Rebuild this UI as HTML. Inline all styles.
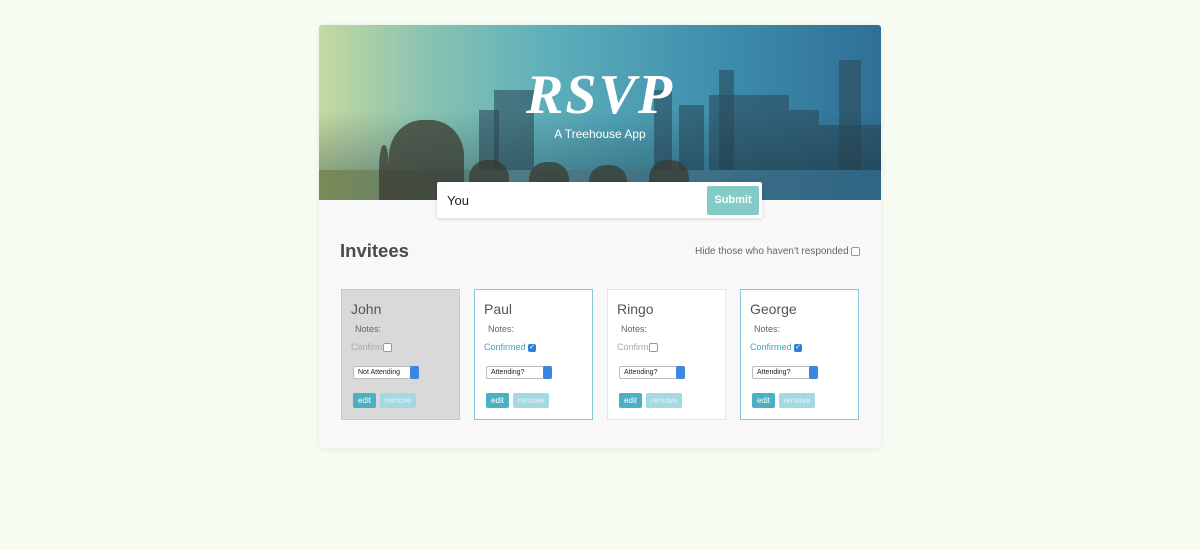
<!DOCTYPE html>
<html><head><style>
body{margin:0;background:#f6fcf2;font-family:"Liberation Sans",sans-serif;width:1200px;height:550px;position:relative;overflow:hidden}
.main{position:absolute;left:319px;top:25px;width:562px;height:423px;background:#f8f8f8;border-radius:3px;box-shadow:0 1px 6px rgba(0,0,0,.08);overflow:hidden}
.hdr{position:absolute;left:0;top:0;width:562px;height:175px;background:linear-gradient(90deg,#c5d9a0 0%,#8cc4b0 18%,#5fb0bb 40%,#3f8fae 70%,#2f6f96 100%);overflow:hidden}
.hdr .shade{position:absolute;left:0;right:0;bottom:0;height:90px;background:linear-gradient(180deg,rgba(20,40,50,0),rgba(20,40,50,.45))}
.b{position:absolute;bottom:0;background:#2c4b5a;opacity:.6}
.water{position:absolute;left:0;right:0;bottom:0;height:30px;background:linear-gradient(90deg,#7a8a55,#4d7a85 35%,#2f6585)}
.p{position:absolute;bottom:0;background:#3a3a30;opacity:.75;border-radius:45% 45% 0 0}
h1{position:absolute;left:0;width:562px;top:38px;margin:0;text-align:center;font:italic bold 56px "Liberation Serif",serif;color:#fff;letter-spacing:2px}
.sub{position:absolute;left:0;width:562px;top:102px;text-align:center;color:#fff;font-size:12px}
.inp{position:absolute;left:437px;top:182px;width:325px;height:36px;background:#fff;border-radius:2px;box-shadow:0 1px 4px rgba(0,0,0,.15)}
.inp span{position:absolute;left:10px;top:11px;font-size:13px;color:#222}
.sb{position:absolute;left:270px;top:4px;width:52px;height:29px;background:#83cbc6;color:#fff;font-size:11px;font-weight:bold;text-align:center;line-height:29px;border-radius:2px}
.title{position:absolute;left:340px;top:240px;font-size:18.5px;font-weight:bold;color:#4a4a4a}
.hide{position:absolute;left:695px;top:246px;font-size:10px;color:#666;white-space:nowrap}
.cb{display:inline-block;width:7px;height:7px;border:1px solid #999;border-radius:2px;background:#fff;vertical-align:middle}
.cbc{display:inline-block;width:8px;height:8px;border-radius:2px;background:#2f7fd6;vertical-align:middle;color:#fff;font-size:7px;line-height:8px;text-align:center}
.card{position:absolute;top:289px;width:119px;height:131px;background:#fff;border:1px solid #e6e6e6;box-sizing:border-box}
.card.r{border-color:#86c7de}
.card.n{background:#d9d9d9;border-color:#c8c8c8}
.nm{position:absolute;left:9px;top:11px;font-size:14px;color:#555}
.nt{position:absolute;left:13px;top:34px;font-size:9px;color:#666}
.cf{position:absolute;left:9px;top:52px;font-size:9px;color:#aaa}
.card.r .cf{color:#3ea3c4}
.sel{position:absolute;left:11px;top:76px;width:60px;height:11px;border:1px solid #bbb;border-radius:2px;background:#fff;font-size:7px;line-height:11px;padding-left:4px;box-sizing:content-box;color:#222}
.sel i{position:absolute;right:-1px;top:-1px;width:9px;height:13px;background:#3c86e0;border-radius:2px}
.e{position:absolute;left:11px;top:103px;width:23px;height:15px;background:#4cb0c5;color:#fff;font-size:8px;text-align:center;line-height:15px;border-radius:2px}
.rm{position:absolute;left:38px;top:103px;width:36px;height:15px;background:#a4d8e2;color:#e8f6f9;font-size:8px;text-align:center;line-height:15px;border-radius:2px}
</style></head><body>
<div class="main">
 <div class="hdr">
  <div class="b" style="left:175px;width:40px;height:110px"></div>
  <div class="b" style="left:160px;width:20px;height:90px"></div>
  <div class="b" style="left:335px;width:18px;height:110px"></div>
  <div class="b" style="left:360px;width:25px;height:95px"></div>
  <div class="b" style="left:400px;width:15px;height:130px"></div>
  <div class="b" style="left:390px;width:80px;height:105px"></div>
  <div class="b" style="left:470px;width:30px;height:90px"></div>
  <div class="b" style="left:520px;width:22px;height:140px"></div>
  <div class="b" style="left:500px;width:62px;height:75px"></div>
  <div class="shade"></div>
  <div class="water"></div>
  <div class="p" style="left:70px;width:75px;height:80px"></div>
  <div class="p" style="left:150px;width:40px;height:40px"></div>
  <div class="p" style="left:210px;width:40px;height:38px"></div>
  <div class="p" style="left:270px;width:38px;height:35px"></div>
  <div class="p" style="left:330px;width:40px;height:40px"></div>
  <div class="p" style="left:60px;width:10px;height:55px"></div>
  <h1>RSVP</h1>
  <div class="sub">A Treehouse App</div>
 </div>
</div>
<div class="inp"><span>You</span><div class="sb">Submit</div></div>
<div class="title">Invitees</div>
<div class="hide">Hide those who haven't responded <span class="cb"></span></div>

<div class="card n" style="left:341px"><div class="nm">John</div><div class="nt">Notes:</div><div class="cf">Confirm<span class="cb"></span></div><div class="sel">Not Attending<i></i></div><div class="e">edit</div><div class="rm">remove</div></div>
<div class="card r" style="left:474px"><div class="nm">Paul</div><div class="nt">Notes:</div><div class="cf">Confirmed <span class="cbc">✓</span></div><div class="sel">Attending?<i></i></div><div class="e">edit</div><div class="rm">remove</div></div>
<div class="card" style="left:607px"><div class="nm">Ringo</div><div class="nt">Notes:</div><div class="cf">Confirm<span class="cb"></span></div><div class="sel">Attending?<i></i></div><div class="e">edit</div><div class="rm">remove</div></div>
<div class="card r" style="left:740px"><div class="nm">George</div><div class="nt">Notes:</div><div class="cf">Confirmed <span class="cbc">✓</span></div><div class="sel">Attending?<i></i></div><div class="e">edit</div><div class="rm">remove</div></div>
</body></html>
